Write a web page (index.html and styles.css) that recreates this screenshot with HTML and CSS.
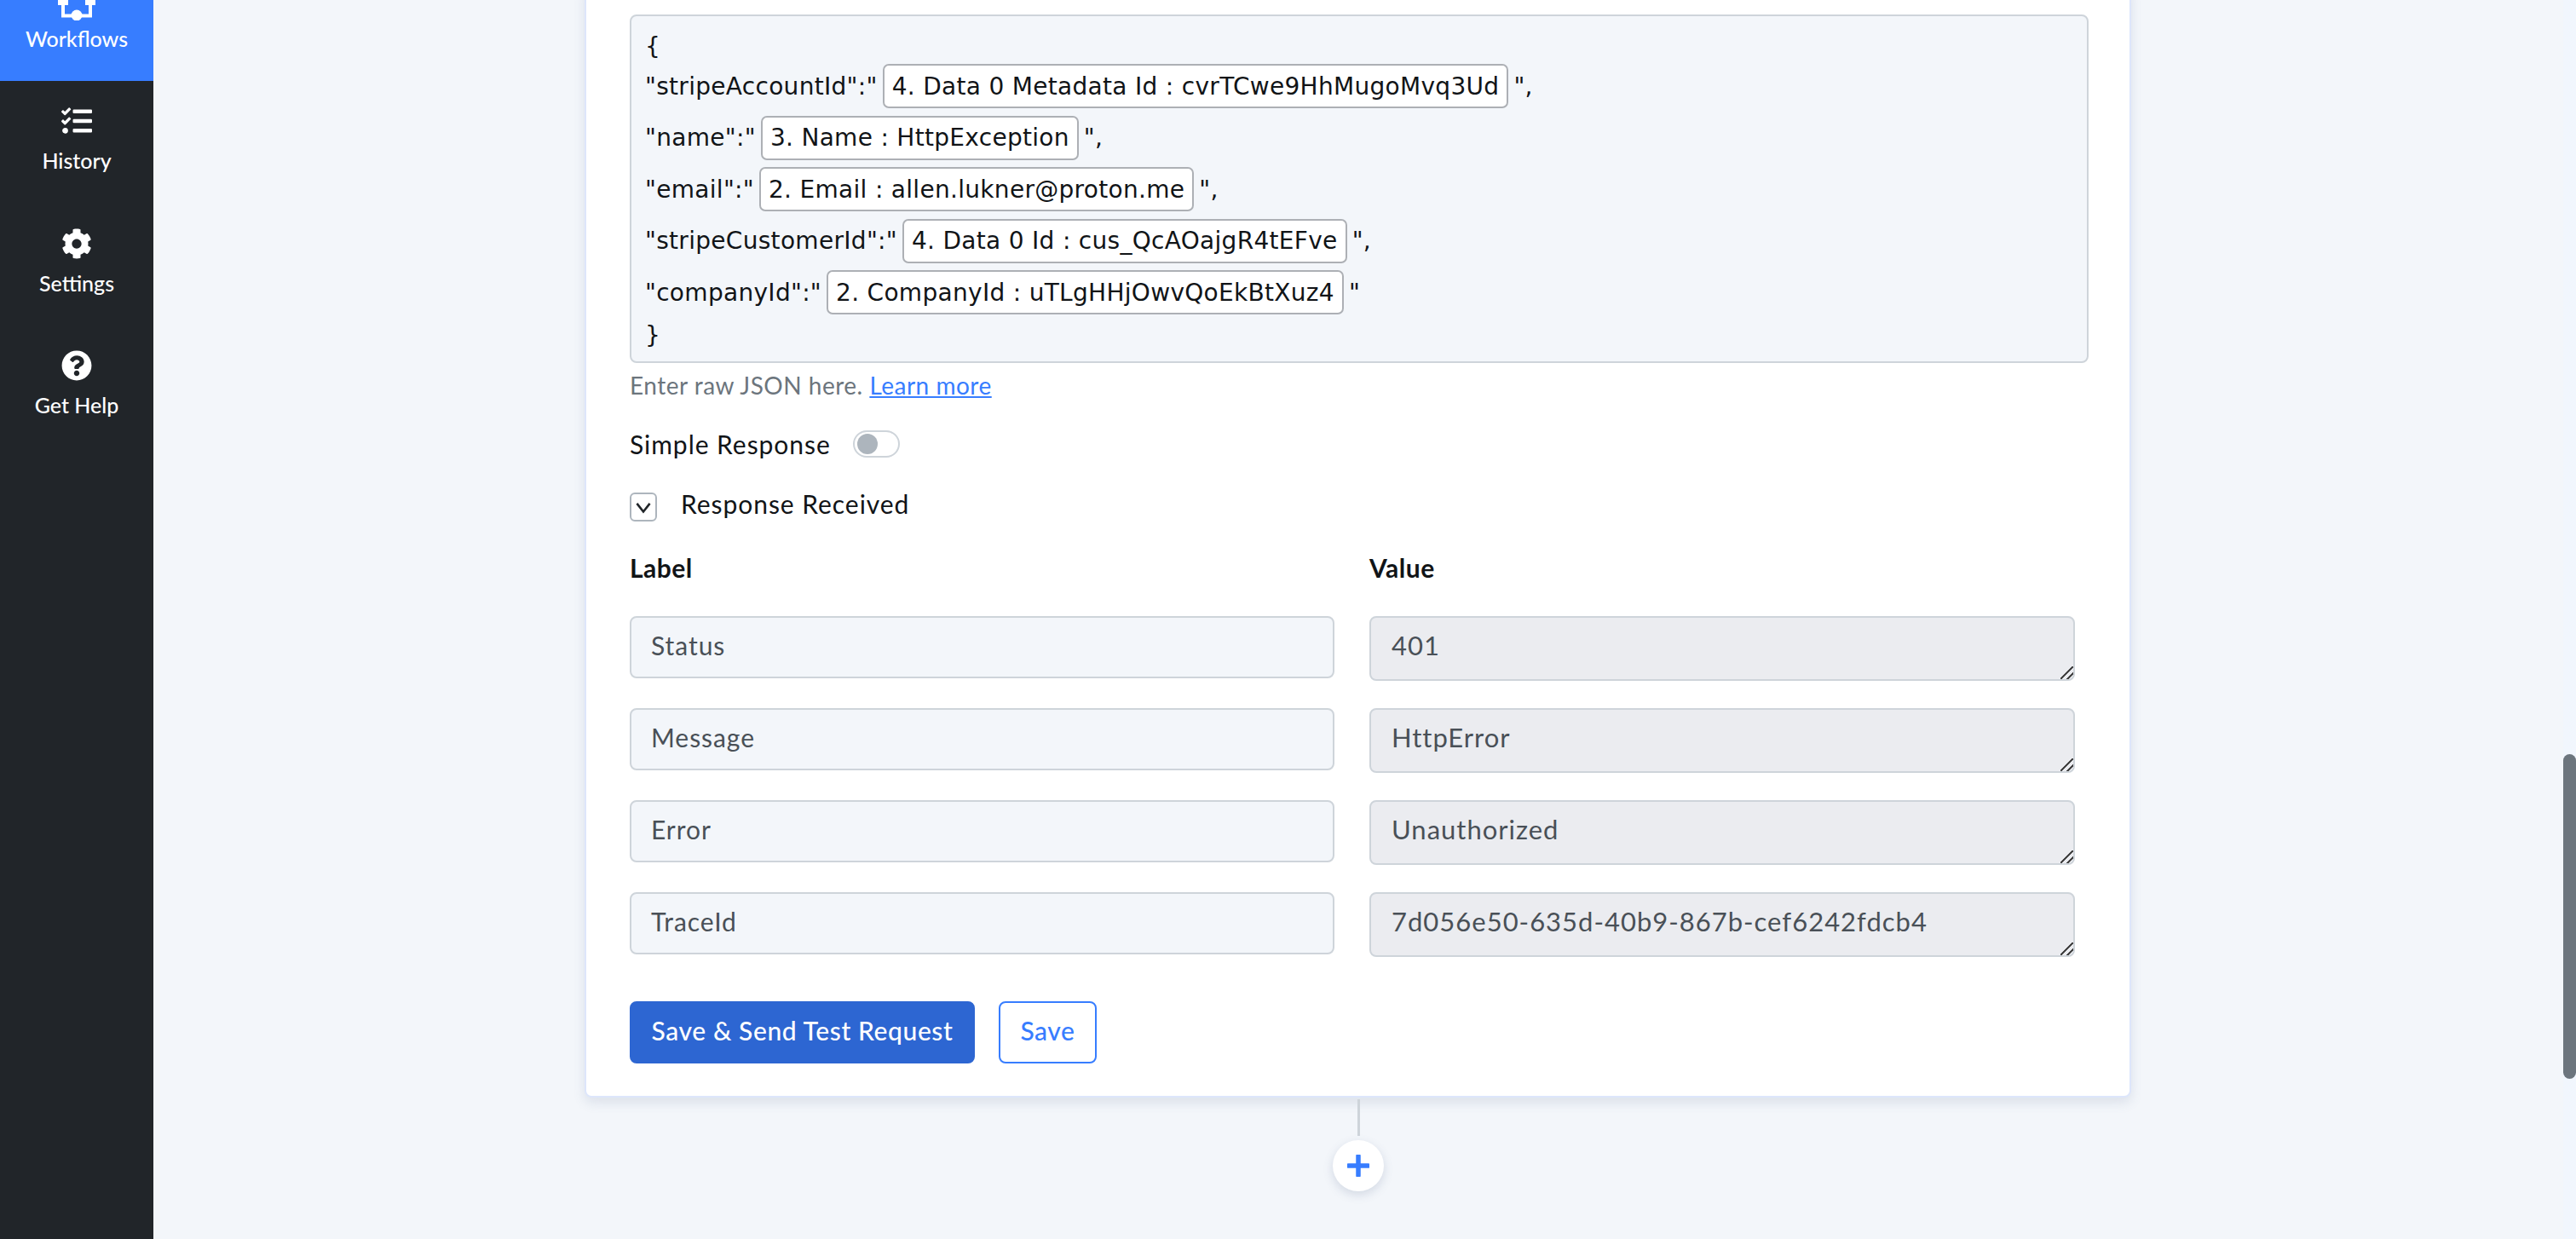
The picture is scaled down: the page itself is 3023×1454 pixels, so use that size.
FILE: index.html
```html
<!DOCTYPE html>
<html lang="en">
<head>
    <meta charset="UTF-8">
    <meta name="viewport" content="width=device-width, initial-scale=1.0">
    <title>Workflows</title>
    <link rel="stylesheet" href="styles.css">
</head>
<body>
    <!-- Sidebar -->
    <nav class="sidebar">
        <a class="nav-item nav-item-active">
            <svg class="nav-icon nav-icon-flow" viewBox="0 0 44 43" xmlns="http://www.w3.org/2000/svg">
                <rect x="0" y="0" width="12" height="25" fill="#fff"/>
                <rect x="32" y="0" width="12" height="25" fill="#fff"/>
                <path d="M6 24V37.5H38V24" fill="none" stroke="#fff" stroke-width="4"/>
                <circle cx="22" cy="37" r="6.5" fill="#fff"/>
            </svg>
            <span>Workflows</span>
        </a>
        <a class="nav-item">
            <svg class="nav-icon" viewBox="0 0 512 512" xmlns="http://www.w3.org/2000/svg">
                <path fill="#fff" d="M139.61 35.5a12 12 0 0 0-17 0L58.93 98.81l-22.7-22.12a12 12 0 0 0-17 0L3.53 92.41a12 12 0 0 0 0 17l47.59 47.4a12.78 12.78 0 0 0 17.61 0l15.59-15.62L156.52 69a12.09 12.09 0 0 0 .09-17zm0 159.19a12 12 0 0 0-17 0l-63.68 63.72-22.7-22.1a12 12 0 0 0-17 0L3.53 252a12 12 0 0 0 0 17L51 316.5a12.77 12.77 0 0 0 17.6 0l15.7-15.69 72.2-72.22a12 12 0 0 0 .09-16.9zM64 368c-26.49 0-48.59 21.5-48.59 48S37.53 464 64 464a48 48 0 0 0 0-96zm432 16H208a16 16 0 0 0-16 16v32a16 16 0 0 0 16 16h288a16 16 0 0 0 16-16v-32a16 16 0 0 0-16-16zm0-320H208a16 16 0 0 0-16 16v32a16 16 0 0 0 16 16h288a16 16 0 0 0 16-16V80a16 16 0 0 0-16-16zm0 160H208a16 16 0 0 0-16 16v32a16 16 0 0 0 16 16h288a16 16 0 0 0 16-16v-32a16 16 0 0 0-16-16z"/>
            </svg>
            <span>History</span>
        </a>
        <a class="nav-item">
            <svg class="nav-icon" viewBox="0 0 512 512" xmlns="http://www.w3.org/2000/svg">
                <path fill="#fff" d="M487.4 315.7l-42.6-24.6c4.3-23.2 4.3-47 0-70.2l42.6-24.6c4.9-2.8 7.1-8.6 5.5-14-11.1-35.6-30-67.8-54.7-94.6-3.8-4.1-10-5.1-14.8-2.3L380.8 110c-17.9-15.4-38.5-27.3-60.8-35.1V25.8c0-5.6-3.9-10.5-9.4-11.7-36.7-8.2-74.3-7.8-109.2 0-5.5 1.2-9.4 6.1-9.4 11.7V75c-22.2 7.9-42.8 19.8-60.8 35.1L88.7 85.5c-4.9-2.8-11-1.9-14.8 2.3-24.7 26.7-43.6 58.9-54.7 94.6-1.7 5.4.6 11.2 5.5 14L67.3 221c-4.3 23.2-4.3 47 0 70.2l-42.6 24.6c-4.9 2.8-7.1 8.6-5.5 14 11.1 35.6 30 67.8 54.7 94.6 3.8 4.1 10 5.1 14.8 2.3l42.6-24.6c17.9 15.4 38.5 27.3 60.8 35.1v49.2c0 5.6 3.9 10.5 9.4 11.7 36.7 8.2 74.3 7.8 109.2 0 5.5-1.2 9.4-6.1 9.4-11.7v-49.2c22.2-7.9 42.8-19.8 60.8-35.1l42.6 24.6c4.9 2.8 11 1.9 14.8-2.3 24.7-26.7 43.6-58.9 54.7-94.6 1.5-5.5-.7-11.3-5.6-14.1zM256 336c-44.1 0-80-35.9-80-80s35.9-80 80-80 80 35.9 80 80-35.9 80-80 80z"/>
            </svg>
            <span>Settings</span>
        </a>
        <a class="nav-item">
            <svg class="nav-icon" viewBox="0 0 512 512" xmlns="http://www.w3.org/2000/svg">
                <path fill="#fff" d="M504 256c0 136.997-111.043 248-248 248S8 392.997 8 256C8 119.083 119.043 8 256 8s248 111.083 248 248zM262.655 90c-54.497 0-89.255 22.957-116.549 63.758-3.536 5.286-2.353 12.415 2.715 16.258l34.699 26.31c5.205 3.947 12.621 3.008 16.665-2.122 17.864-22.658 30.113-35.797 57.303-35.797 20.429 0 45.698 13.148 45.698 32.958 0 14.976-12.363 22.667-32.534 33.976C247.128 238.528 216 254.941 216 296v4c0 6.627 5.373 12 12 12h56c6.627 0 12-5.373 12-12v-1.333c0-28.462 83.186-29.647 83.186-106.667 0-58.002-60.165-102-116.531-102zM256 338c-25.365 0-46 20.635-46 46 0 25.364 20.635 46 46 46s46-20.636 46-46c0-25.365-20.635-46-46-46z"/>
            </svg>
            <span>Get Help</span>
        </a>
    </nav>

    <main class="canvas">
        <section class="card">
            <!-- Raw JSON body -->
            <div class="json-box">
                <div class="json-brace">{</div>
                <div class="json-line">"stripeAccountId":"<span class="chip">4. Data 0 Metadata Id : cvrTCwe9HhMugoMvq3Ud</span>",</div>
                <div class="json-line">"name":"<span class="chip">3. Name : HttpException</span>",</div>
                <div class="json-line">"email":"<span class="chip">2. Email : allen.lukner@proton.me</span>",</div>
                <div class="json-line">"stripeCustomerId":"<span class="chip">4. Data 0 Id : cus_QcAOajgR4tEFve</span>",</div>
                <div class="json-line">"companyId":"<span class="chip">2. CompanyId : uTLgHHjOwvQoEkBtXuz4</span>"</div>
                <div class="json-brace json-brace-end">}</div>
            </div>
            <p class="hint">Enter raw JSON here. <a class="hint-link">Learn more</a></p>

            <div class="toggle-row">
                <span>Simple Response</span>
                <span class="toggle"><span class="toggle-knob"></span></span>
            </div>

            <div class="response-row">
                <span class="chevron-box">
                    <svg viewBox="0 0 16 16" width="22" height="22" xmlns="http://www.w3.org/2000/svg">
                        <path d="M2.5 5L8 12L13.5 5" fill="none" stroke="#212529" stroke-width="1.9"/>
                    </svg>
                </span>
                <span class="response-title">Response Received</span>
            </div>

            <div class="response-grid">
                <div class="col-head">Label</div>
                <div class="col-head">Value</div>

                <div class="field-label">Status</div>
                <textarea class="field-value" readonly>401</textarea>

                <div class="field-label">Message</div>
                <textarea class="field-value" readonly>HttpError</textarea>

                <div class="field-label">Error</div>
                <textarea class="field-value" readonly>Unauthorized</textarea>

                <div class="field-label">TraceId</div>
                <textarea class="field-value" readonly>7d056e50-635d-40b9-867b-cef6242fdcb4</textarea>
            </div>

            <div class="actions">
                <button class="btn btn-primary">Save &amp; Send Test Request</button>
                <button class="btn btn-outline">Save</button>
            </div>
        </section>

        <div class="connector"></div>
        <button class="add-step">
            <svg viewBox="0 0 26 26" width="26" height="26" xmlns="http://www.w3.org/2000/svg">
                <path d="M13 1.5V24.5M1.5 13H24.5" fill="none" stroke="#377dff" stroke-width="5.5" stroke-linecap="round"/>
            </svg>
        </button>
    </main>

    <div class="scroll-track"><div class="scroll-thumb"></div></div>
</body>
</html>
```

FILE: styles.css
```css
* {
    box-sizing: border-box;
}

html, body {
    height: 100%;
}

body {
    margin: 0;
    display: flex;
    overflow: hidden;
    background-color: #f3f6fa;
    color: #111417;
    font-family: 'Lato', 'Noto Sans', sans-serif;
    font-size: 30px;
    letter-spacing: 0.95px;
}

/* Sidebar */
.sidebar {
    flex: 0 0 180px;
    height: 100%;
    background-color: #212529;
}

.nav-item {
    display: flex;
    flex-direction: column;
    align-items: center;
    height: 143.5px;
    padding-top: 29px;
    color: #fff;
    font-size: 25px;
    font-weight: 500;
    letter-spacing: 0;
}

.nav-item-active {
    margin-top: -48.5px;
    background-color: #377dff;
}

.nav-icon {
    flex: none;
    height: 36px;
    width: 44px;
    margin-bottom: 13px;
}

/* this one is taller than the others and runs off the top of the page */
.nav-icon-flow {
    height: 43px;
    margin-bottom: 6px;
}

/* Main column */
.canvas {
    flex: 1;
    display: flex;
    flex-direction: column;
    align-items: center;
}

.card {
    width: 1815px;
    margin-top: -20px;
    margin-left: -1px;
    padding: 35px 48px 38px 51px;
    background: #fff;
    border: 2px solid #dde6fb;
    border-radius: 8px;
    box-shadow: 0 6px 14px rgba(80, 100, 140, 0.14);
}

/* JSON box */
.json-box {
    height: 409px;
    padding: 20px 16px 0;
    background: #f3f6fa;
    border: 2px solid #ced4da;
    border-radius: 8px;
    font-family: 'DejaVu Sans', sans-serif;
    font-size: 28px;
    letter-spacing: 0.3px;
    color: #111417;
}

.json-brace {
    height: 32px;
    line-height: 32px;
}

.json-brace-end {
    margin-top: 4px;
}

.json-line {
    display: flex;
    align-items: center;
    gap: 6px;
    height: 60.5px;
    white-space: pre;
}

.chip {
    display: inline-flex;
    align-items: center;
    height: 52px;
    padding: 0 9px;
    background: #fff;
    border: 2px solid #adb0b5;
    border-radius: 7px;
}

.hint {
    height: 40px;
    margin: 6px 0 0;
    line-height: 40px;
    font-size: 28px;
    letter-spacing: 0.5px;
    color: #6c757d;
}

.hint-link {
    color: #377dff;
    text-decoration: underline;
}

/* Toggle and collapse rows */
.toggle-row {
    display: flex;
    align-items: center;
    gap: 26px;
    height: 32px;
    margin-top: 33px;
}

.toggle {
    display: flex;
    align-items: center;
    width: 55px;
    height: 32px;
    padding-left: 3px;
    border: 2px solid #ced4da;
    border-radius: 16px;
    background: #fff;
}

.toggle-knob {
    width: 24px;
    height: 24px;
    border-radius: 50%;
    background: #adb5bd;
}

.response-row {
    display: flex;
    align-items: center;
    gap: 28px;
    height: 34px;
    margin-top: 41px;
}

.response-title {
    margin-bottom: 8px;
}

.chevron-box {
    display: flex;
    align-items: center;
    justify-content: center;
    width: 32px;
    height: 34px;
    border: 2px solid #adb5bd;
    border-radius: 6px;
    background: #fff;
}

/* Label / value grid */
.response-grid {
    display: grid;
    grid-template-columns: 827px 828px;
    grid-template-rows: 44px repeat(4, 76px);
    column-gap: 41px;
    row-gap: 32px;
    margin-top: 35px;
}

.col-head {
    font-weight: 700;
    line-height: 38px;
    letter-spacing: 0.5px;
}

.field-label {
    height: 73px;
    padding: 0 23px;
    background: #f3f6fa;
    border: 2px solid #ced4da;
    border-radius: 8px;
    color: #495057;
    line-height: 65px;
}

.field-value {
    display: block;
    width: 828px;
    height: 76px;
    min-height: 76px;
    padding: 12px 24px;
    background: #ebecf0;
    border: 2px solid #ced4da;
    border-radius: 8px;
    color: #495057;
    font-family: inherit;
    font-size: 31px;
    letter-spacing: 1px;
    line-height: 40px;
    overflow: hidden;
    outline: none;
    resize: vertical;
}

/* two-stroke grip, heavier than the default one */
.field-value::-webkit-resizer {
    background: linear-gradient(135deg, transparent 45%, #444 45%, #444 55%, transparent 55%, transparent 72%, #444 72%, #444 82%, transparent 82%);
}

/* Buttons */
.actions {
    display: flex;
    gap: 28px;
    margin-top: 52px;
}

.btn {
    height: 73px;
    padding: 0 0 5px;
    border-radius: 8px;
    font-family: inherit;
    font-size: 30px;
    font-weight: 500;
    letter-spacing: 0.6px;
}

.btn-primary {
    width: 405px;
    background: #2d66d2;
    border: 2px solid #2d66d2;
    color: #fff;
}

.btn-outline {
    width: 115px;
    background: #fff;
    border: 2px solid #377dff;
    color: #377dff;
}

/* Connector under the card */
.connector {
    width: 3px;
    height: 43px;
    margin-top: 2px;
    background: #ced4da;
}

.add-step {
    display: flex;
    align-items: center;
    justify-content: center;
    width: 60px;
    height: 60px;
    margin-top: 5px;
    padding: 0;
    border: none;
    border-radius: 50%;
    background: #fff;
    box-shadow: 0 4px 12px rgba(80, 100, 140, 0.2);
}

/* Scrollbar */
.scroll-track {
    flex: 0 0 15px;
    height: 100%;
    padding-top: 885px;
    background: #f1f6fd;
}

.scroll-thumb {
    height: 381px;
    border-radius: 8px;
    background: #6c757d;
}
```
